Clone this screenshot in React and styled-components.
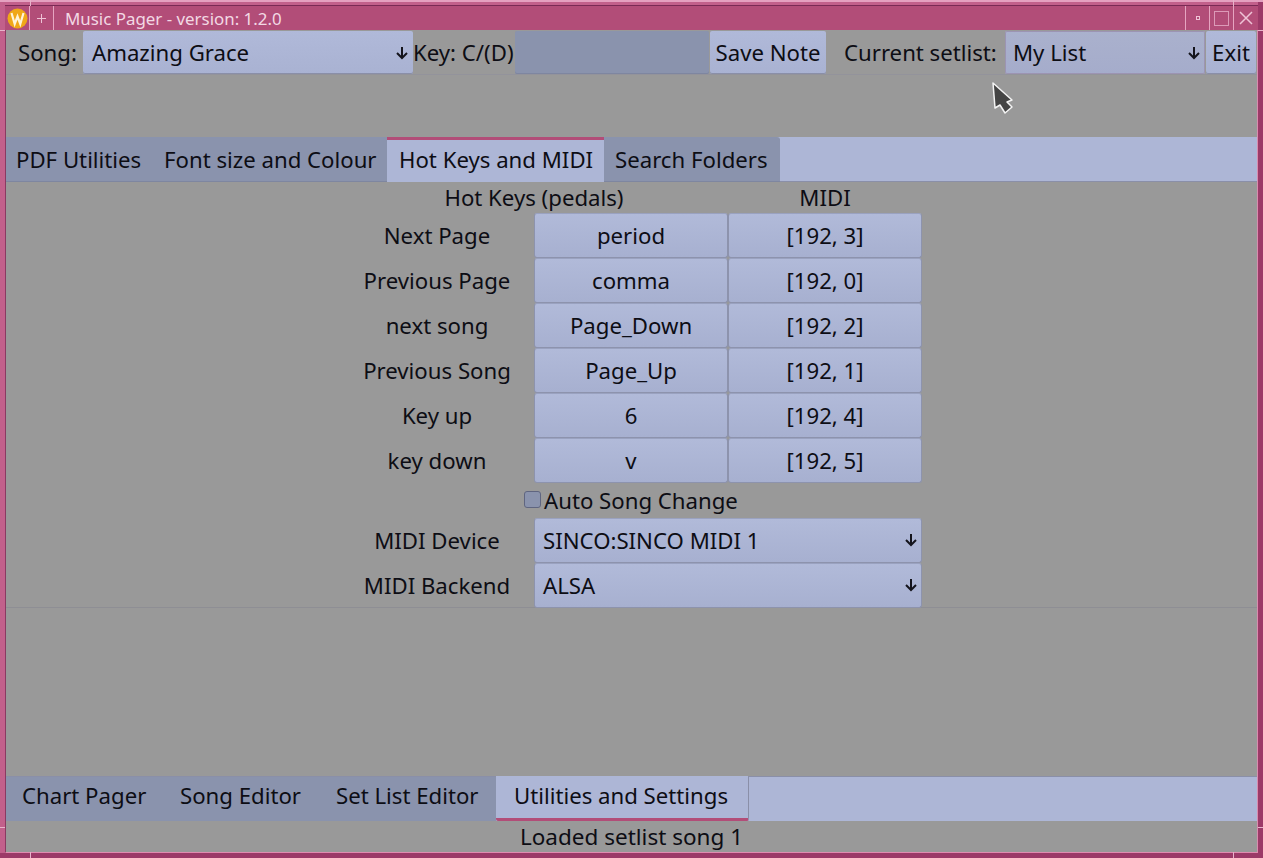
import React from "react"
import styled, {createGlobalStyle} from "styled-components"

const Global = createGlobalStyle`
  *, *::before, *::after { box-sizing: border-box; }
  html, body { margin: 0; padding: 0; background: #999; }
  body { font-family: "Noto Sans", sans-serif; font-size: 22.2px; color: #0d0d14; }
`

const Frame = styled.div`
  position: relative;
  width: 1263px;
  height: 858px;
  display: flex;
  flex-direction: column;
  padding: 5px;
  background: #c2608b;
  box-shadow: inset 0 2px 0 #e4a1c0, inset -5px -5px 0 #9c3a68;
  overflow: hidden;
`

const Tick = styled.div`
  position: absolute;
  background: #e8b4cb;
  ${p => p.v ? `width: 1px; height: 6px; left: ${p.at}px; ${p.bottom ? "bottom: 0;" : "top: 0;"}`
    : `height: 1px; width: 5px; top: ${p.at}px; ${p.right ? "right: 0;" : "left: 0;"}`}
`

const TitleBar = styled.div`
  height: 25px;
  flex: none;
  display: flex;
  align-items: stretch;
  border-top: 1px solid #7a2a55;
  background: #b24d78;
  color: #f2d9e4;
  font-size: 16.9px;
`

const TitleIcon = styled.div`
  width: 25px;
  display: flex;
  align-items: center;
  justify-content: center;
  border-right: 1px solid #e6a5c1;
`

const TitleBtn = styled.div`
  width: ${p => p.w}px;
  display: flex;
  align-items: center;
  justify-content: center;
  border-left: ${p => p.edge ? "1px solid #e6a5c1" : "0"};
  border-right: ${p => p.last ? "0" : "1px solid #e6a5c1"};
`

const TitleText = styled.div`
  flex: 1;
  padding-left: 11px;
  line-height: 25px;
  white-space: nowrap;
`

const Body = styled.div`
  flex: 1;
  min-height: 0;
  display: flex;
  flex-direction: column;
  background: #999;
  border-left: 1px solid #8a3a62;
  border-right: 1px solid #d98cae;
  border-bottom: 1px solid #e08db0;
`

const TopRow = styled.div`
  height: 45px;
  flex: none;
  display: flex;
  align-items: stretch;
  padding-top: 1px;
  border-bottom: 1px solid #93939b;
`

const Label = styled.div`
  display: flex;
  align-items: center;
  white-space: nowrap;
  width: ${p => p.w}px;
  padding-left: ${p => p.left || 0}px;
`

const FormLabel = styled.div`
  display: flex;
  align-items: center;
  justify-content: center;
  white-space: nowrap;
  padding-right: 22px;
`

const Combo = styled.div`
  display: flex;
  align-items: center;
  justify-content: space-between;
  width: ${p => p.w}px;
  padding: 0 4px 0 ${p => p.muted ? 8 : 9}px;
  background: ${p => p.muted ? "linear-gradient(#aab1cd, #a5accb)" : "linear-gradient(#b0b9d9, #a9b2d2)"};
  border-radius: 2px;
  box-shadow: ${p => p.muted ? "inset 0 0 0 1px #9c94b2" : "inset 0 -1px 0 #8a8fa8"};
`

const Btn = styled.div`
  display: flex;
  align-items: center;
  justify-content: center;
  width: ${p => p.w}px;
  margin-left: 1px;
  background: linear-gradient(#b0b9d9, #a9b2d2);
  border-radius: 2px;
  box-shadow: inset 0 -1px 0 #8a8fa8;
`

const NoteField = styled.div`
  width: 194px;
  background: #8a93ad;
  border-radius: 2px;
  box-shadow: inset 0 -1px 0 #7e86a0;
`

const Spacer = styled.div`
  height: 62px;
  flex: none;
`

const TabBar = styled.div`
  height: 45px;
  flex: none;
  display: flex;
  background: #adb6d6;
  border-bottom: 1px solid #8a8fa8;
`

const Tab = styled.div`
  display: flex;
  align-items: center;
  white-space: nowrap;
  width: ${p => p.w}px;
  padding: 0 0 4px ${p => p.left}px;
  margin-bottom: -1px;
  background: ${p => p.active ? "#adb6d6" : "#8a93ad"};
  border-top: 3px solid ${p => p.active ? "#b24d78" : "#8a93ad"};
  border-radius: ${p => p.round ? "0 3px 0 0" : "0"};
  box-shadow: ${p => p.active ? "none" : "inset 0 -1px 0 #7e86a0"};
`

const Panel = styled.div`
  flex: 1 1 0;
  min-height: 0;
`

const FormArea = styled.div`
  height: 426px;
  padding-left: 356px;
  border-bottom: 1px solid #8e8e94;
`

const FormGrid = styled.div`
  display: grid;
  grid-template-columns: 172px 194px 194px;
  grid-template-rows: 31px repeat(6, 45px) 35px 45px 45px;
`

const HeaderCell = styled.div`
  grid-column: ${p => p.col};
  display: flex;
  align-items: center;
  justify-content: center;
  white-space: nowrap;
  padding-right: ${p => p.right || 0}px;
`

const CheckRow = styled.div`
  grid-column: 1 / 4;
  display: flex;
  align-items: center;
  gap: 3px;
  padding-left: 162px;
`

const CheckBox = styled.div`
  width: 17px;
  height: 17px;
  margin-top: -3px;
  background: #8a93ad;
  border: 1px solid #5f6580;
  border-radius: 3px;
`

const FormBtn = styled.div`
  display: flex;
  align-items: center;
  justify-content: center;
  padding-bottom: 1px;
  background: linear-gradient(#b1bad9, #a7b0d0);
  border: 1px solid #8d93ad;
  border-top-color: #9aa2c0;
  border-radius: 3px;
`

const FormCombo = styled.div`
  grid-column: 2 / 4;
  display: flex;
  align-items: center;
  justify-content: space-between;
  padding: 0 3px 1px 8px;
  background: linear-gradient(#b1bad9, #a7b0d0);
  border: 1px solid #8d93ad;
  border-top-color: #9aa2c0;
  border-radius: 3px;
`

const BottomBar = styled.div`
  height: 45px;
  flex: none;
  display: flex;
  background: #adb6d6;
  border-top: 1px solid #8a8fa8;
`

const BottomTab = styled.div`
  display: flex;
  align-items: center;
  white-space: nowrap;
  width: ${p => p.w}px;
  padding: 0 0 ${p => p.active ? 3 : 5}px ${p => p.left}px;
  background: ${p => p.active ? "#adb6d6" : "#8a93ad"};
  border-bottom: 3px solid ${p => p.active ? "#b24d78" : "#8a93ad"};
  border-right: ${p => p.active ? "1px solid #8a8fa8" : "0"};
  margin-top: ${p => p.active ? "-1px" : "0"};
  border-radius: ${p => p.active ? "0 0 2px 2px" : "0"};
`

const Status = styled.div`
  height: 31px;
  flex: none;
  display: flex;
  align-items: center;
  justify-content: center;
  font-size: 22.5px;
`

const Pointer = styled.svg`
  position: absolute;
  left: 992px;
  top: 82px;
`

const Arrow = () => (
  <svg width="14" height="16" viewBox="0 0 14 16" fill="none" stroke="#14141c" strokeWidth="2">
    <path d="M7 2v11M2 8l5 5 5-5" />
  </svg>
)

const rows = [
  ["Next Page", "period", "[192, 3]"],
  ["Previous Page", "comma", "[192, 0]"],
  ["next song", "Page_Down", "[192, 2]"],
  ["Previous Song", "Page_Up", "[192, 1]"],
  ["Key up", "6", "[192, 4]"],
  ["key down", "v", "[192, 5]"],
]

const App = () => {
  return (
    <Frame>
      <Global />
      <TitleBar>
        <TitleIcon>
          <svg width="21" height="21" viewBox="0 0 21 21">
            <circle cx="10.5" cy="10.5" r="10" fill="#f0a818" />
            <path d="M4.5 5l3.2 11 2.8-7.5 2.8 7.5 3.2-11" fill="none" stroke="#fff4d8" strokeWidth="2.2" />
          </svg>
        </TitleIcon>
        <TitleBtn w={24}>
          <svg width="9" height="9" viewBox="0 0 9 9" stroke="#eec3d6"><path d="M4.5 0v9M0 4.5h9" /></svg>
        </TitleBtn>
        <TitleText>Music Pager - version: 1.2.0</TitleText>
        <TitleBtn w={25} edge>
          <svg width="4" height="4" viewBox="0 0 4 4" fill="none" stroke="#eec3d6"><rect x=".5" y=".5" width="3" height="3" /></svg>
        </TitleBtn>
        <TitleBtn w={24}>
          <svg width="15" height="15" viewBox="0 0 15 15" fill="none" stroke="#dc9ab8"><rect x=".5" y=".5" width="14" height="14" /></svg>
        </TitleBtn>
        <TitleBtn w={24} last>
          <svg width="14" height="14" viewBox="0 0 14 14" stroke="#eec3d6" strokeWidth="1.5"><path d="M1 1l12 12M13 1L1 13" /></svg>
        </TitleBtn>
      </TitleBar>
      <Body>
        <TopRow>
          <Label w={77} left={12}>Song:</Label>
          <Combo w={330}>Amazing Grace<Arrow /></Combo>
          <Label w={102}>Key: C/(D)</Label>
          <NoteField />
          <Btn w={116}>Save Note</Btn>
          <Label w={179} left={18}>Current setlist:</Label>
          <Combo w={200} muted>My List<Arrow /></Combo>
          <Btn w={50}>Exit</Btn>
        </TopRow>
        <Spacer />
        <TabBar>
          <Tab w={146} left={10}>PDF Utilities</Tab>
          <Tab w={235} left={12}>Font size and Colour</Tab>
          <Tab w={217} left={12} active>Hot Keys and MIDI</Tab>
          <Tab w={176} left={11} round>Search Folders</Tab>
        </TabBar>
        <Panel>
          <FormArea>
            <FormGrid>
              <HeaderCell col="1 / 3" right={22}>Hot Keys (pedals)</HeaderCell>
              <HeaderCell col="3">MIDI</HeaderCell>
              {rows.map(r => (
                <React.Fragment key={r[0]}>
                  <FormLabel>{r[0]}</FormLabel>
                  <FormBtn>{r[1]}</FormBtn>
                  <FormBtn>{r[2]}</FormBtn>
                </React.Fragment>
              ))}
              <CheckRow><CheckBox />Auto Song Change</CheckRow>
              <FormLabel>MIDI Device</FormLabel>
              <FormCombo>SINCO:SINCO MIDI 1<Arrow /></FormCombo>
              <FormLabel>MIDI Backend</FormLabel>
              <FormCombo>ALSA<Arrow /></FormCombo>
            </FormGrid>
          </FormArea>
        </Panel>
        <BottomBar>
          <BottomTab w={157} left={16}>Chart Pager</BottomTab>
          <BottomTab w={155} left={17}>Song Editor</BottomTab>
          <BottomTab w={178} left={18}>Set List Editor</BottomTab>
          <BottomTab w={253} left={18} active>Utilities and Settings</BottomTab>
        </BottomBar>
        <Status>Loaded setlist song 1</Status>
      </Body>
      <Tick v at={30} />
      <Tick v at={1233} />
      <Tick v bottom at={30} />
      <Tick v bottom at={1233} />
      <Tick at={30} />
      <Tick at={30} right />
      <Tick at={827} />
      <Tick at={827} right />
      <Pointer width="22" height="33" viewBox="0 0 22 33">
        <path d="M1 1L20 18L15 20L20 25L13 31L8 23L3 26z" fill="#444" stroke="#f4f4f4" strokeWidth="1.5" strokeLinejoin="round" />
      </Pointer>
    </Frame>
  )
}

export default App
